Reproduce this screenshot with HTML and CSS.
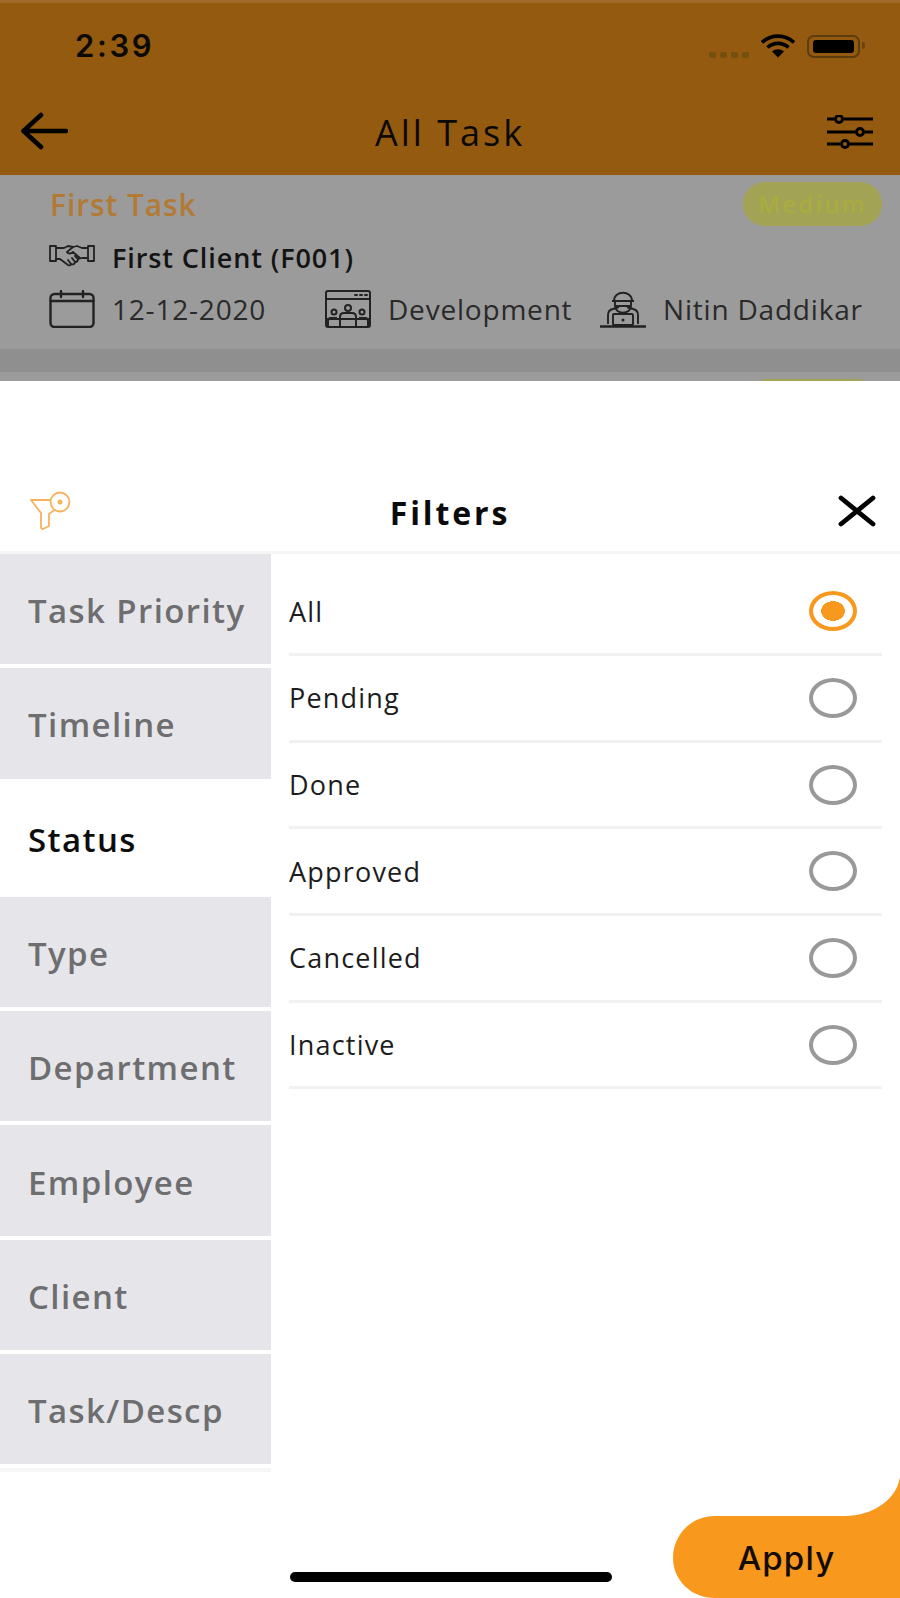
FILE: index.html
```html
<!DOCTYPE html>
<html lang="en">
<head>
<meta charset="utf-8">
<title>All Task</title>
<link rel="stylesheet" href="styles.css">
</head>
<body>
<div class="screen">
  <header class="appbar">
    <div class="status">
      <span class="time">2:39</span>
      <div class="status-icons">
        <span class="dots"><i></i><i></i><i></i><i></i></span>
        <svg class="wifi" viewBox="0 0 36 24"><path d="M2 8.500C11 0 25 0 34 8.500M7.500 13.500C13.500 8 22.500 8 28.500 13.500" fill="none" stroke="#000" stroke-width="3.600"/><path d="M12 17.500C15.500 14.500 20.500 14.500 24 17.500L18 23.500Z" fill="#000"/></svg>
        <span class="battery"><i></i></span>
      </div>
    </div>
    <nav class="nav">
      <svg class="back" viewBox="0 0 48 38"><path d="M21 3 3.500 19 21 35M3.500 19H46" fill="none" stroke="#000" stroke-width="4.600" stroke-linecap="round" stroke-linejoin="round"/></svg>
      <h1 class="nav-title">All Task</h1>
      <svg class="sliders" viewBox="0 0 46 34"><g fill="none" stroke="#000" stroke-width="3"><path d="M0 4h7M17 4h29M0 17h28M38 17h8M0 29h13M23 29h23"/><circle cx="12" cy="4" r="3.500"/><circle cx="33" cy="17" r="3.500"/><circle cx="18" cy="29" r="3.500"/></g></svg>
    </nav>
  </header>

  <section class="list">
    <article class="card">
      <div class="card-top">
        <span class="task-name">First Task</span>
        <span class="badge">Medium</span>
      </div>
      <div class="client">
        <svg class="icon-client" viewBox="0 0 46 24"><g fill="none" stroke="#222" stroke-width="1.800" stroke-linejoin="round" stroke-linecap="round"><path d="M1 3h6v15H1zM39 3h6v15h-6z"/><path d="M7 5h8l4-2 5 1 4-1 5 2h6M7 16h4l8 6c2 1 3 0 3-1 2 1 4 0 4-2 2 0 3-1 3-3l4-1h6"/><path d="M24 4l-6 5c1 2 4 2 6 0l7 6M19 17l3 4M23 15l3 4M26 13l3 3"/></g></svg>
        <span>First Client (F001)</span>
      </div>
      <div class="meta">
        <span class="meta-item">
          <svg class="icon" viewBox="0 0 46 38"><g fill="none" stroke="#222" stroke-width="2.400" stroke-linecap="round"><rect x="1.500" y="4" width="43" height="33" rx="4"/><path d="M1.500 11h43M12 1v6M34 1v6"/></g></svg>
          <span>12-12-2020</span>
        </span>
        <span class="meta-item">
          <svg class="icon" viewBox="0 0 46 38"><g fill="none" stroke="#222" stroke-width="2"><rect x="1" y="1" width="44" height="36" rx="2"/><path d="M1 9h44M1 29h44"/><path d="M30 5h2M35 5h2M40 5h2" stroke-linecap="round"/><circle cx="23" cy="18" r="3"/><circle cx="9" cy="22" r="2.500"/><circle cx="37" cy="22" r="2.500"/><path d="M15 37V27q0-4 4-4h8q4 0 4 4v10M3 37v-6q0-3 3-3h6M43 37v-6q0-3-3-3h-6"/></g></svg>
          <span>Development</span>
        </span>
        <span class="meta-item">
          <svg class="icon" viewBox="0 0 46 38"><g fill="none" stroke="#222" stroke-width="1.900" stroke-linejoin="round"><path d="M14 11C14 0 32 0 32 11M12 11h22"/><path d="M15 11v5c0 9 16 9 16 0v-5M16 16h14"/><path d="M8 34v-9q0-5 5-6l6-2M38 34v-9q0-5-5-6l-6-2"/><rect x="13" y="24" width="20" height="11" rx="1"/><path d="M0 36.500h46" stroke-width="2.500"/></g><circle cx="23" cy="30" r="1.500" fill="#222"/></svg>
          <span>Nitin Daddikar</span>
        </span>
      </div>
    </article>
    <div class="card-gap"></div>
    <div class="card-next"><span class="badge-next"></span></div>
  </section>

  <section class="sheet">
    <div class="sheet-head">
      <svg class="filter-icon" viewBox="0 0 42 40"><g fill="none" stroke="#f7b25f" stroke-width="1.800" stroke-linejoin="round"><path d="M1 9h20c0 3 2 6 6 8l-8 6v12l-6 3c-2 0-2-1-2-2V22Z"/><circle cx="30" cy="11" r="9.500" fill="#fff"/></g><circle cx="30" cy="11" r="2.500" fill="#f7b25f"/></svg>
      <h2 class="sheet-title">Filters</h2>
      <svg class="close" viewBox="0 0 38 32"><path d="M3 3l32 26M35 3 3 29" fill="none" stroke="#000" stroke-width="4.800" stroke-linecap="round"/></svg>
    </div>
    <div class="sheet-body">
      <aside class="tabs">
        <div class="tab">Task Priority</div>
        <div class="tab">Timeline</div>
        <div class="tab tab-active">Status</div>
        <div class="tab">Type</div>
        <div class="tab">Department</div>
        <div class="tab">Employee</div>
        <div class="tab">Client</div>
        <div class="tab">Task/Descp</div>
        <div class="tab-end"></div>
      </aside>
      <div class="options">
        <div class="option"><span>All</span><span class="radio radio-on"></span></div>
        <div class="option"><span>Pending</span><span class="radio"></span></div>
        <div class="option"><span>Done</span><span class="radio"></span></div>
        <div class="option"><span>Approved</span><span class="radio"></span></div>
        <div class="option"><span>Cancelled</span><span class="radio"></span></div>
        <div class="option"><span>Inactive</span><span class="radio"></span></div>
      </div>
    </div>
    <div class="home-bar"></div>
    <button class="apply" type="button">
      <svg class="apply-shape" viewBox="0 0 227 121"><path d="M227 0V121H42C18 121 0 103 0 81 0 58 18 39 42 39H172C200 39 224 22 227 0Z" fill="#f8981d"/></svg>
      <span class="apply-label">Apply</span>
    </button>
  </section>
</div>
</body>
</html>
```

FILE: styles.css
```css
* { box-sizing: border-box; }
html, body { margin: 0; padding: 0; background: #fff; }
body { font-family: "Open Sans", "Liberation Sans", sans-serif; }
h1, h2 { margin: 0; font-weight: inherit; }

.screen {
  position: relative;
  width: 900px;
  height: 1598px;
  display: flex;
  flex-direction: column;
  overflow: hidden;
}

.appbar {
  height: 175px;
  background: #945a10;
  border-top: 3px solid #a06c2a;
  color: #000;
  flex: none;
}
.status {
  height: 91px;
  display: flex;
  align-items: flex-start;
  justify-content: space-between;
  padding: 25px 40px 0 75px;
}
.time {
  font-family: Inter, "Liberation Sans", sans-serif;
  font-size: 31px;
  font-weight: 600;
  line-height: 35px;
  letter-spacing: 2.600px;
  color: #0c0a05;
}
.status-icons {
  display: flex;
  align-items: center;
  gap: 11px;
  padding-top: 6px;
}
.dots { display: flex; gap: 4px; padding-top: 18px; }
.dots i { width: 7px; height: 6px; border-radius: 2px; background: #74500f; }
.wifi { width: 36px; height: 24px; display: block; margin-left: 0; }
.battery {
  position: relative;
  width: 53px;
  height: 23px;
  padding: 3px 4px;
  border: 2px solid #5b3d10;
  border-radius: 7px;
  display: block;
}
.battery::after {
  content: "";
  position: absolute;
  right: -7px;
  top: 5px;
  width: 3px;
  height: 7px;
  border-radius: 0 2px 2px 0;
  background: #6b4510;
}
.battery i { display: block; height: 100%; width: 100%; border-radius: 3px; background: #000; }

.nav {
  height: 81px;
  display: grid;
  grid-template-columns: 1fr auto 1fr;
  align-items: start;
  padding: 18px 27px 0 20px;
}
.back { width: 48px; height: 38px; display: block; }
.nav-title {
  font-size: 36px;
  line-height: 44px;
  letter-spacing: 3px;
  color: #0b0903;
  margin-top: -1px;
  margin-left: 7px;
}
.sliders { width: 46px; height: 34px; display: block; margin-top: 3px; justify-self: end; }

.list {
  height: 206px;
  background: #9b9b9b;
  flex: none;
  overflow: hidden;
}
.card { height: 174px; padding: 7px 18px 0 49px; }
.card-top {
  display: flex;
  justify-content: space-between;
  align-items: center;
  height: 44px;
}
.task-name {
  font-size: 30px;
  font-weight: 600;
  letter-spacing: .9px;
  margin-left: 1px;
  color: #b27a35;
}
.badge {
  width: 139px;
  height: 44px;
  border-radius: 22px;
  background: #a3a355;
  color: #a9ac3e;
  font-size: 24px;
  font-weight: 600;
  letter-spacing: 2.200px;
  text-align: center;
  line-height: 44px;
}
.client {
  display: flex;
  align-items: center;
  gap: 17px;
  margin-top: 13px;
  height: 36px;
  font-size: 27px;
  font-weight: 600;
  letter-spacing: .9px;
  color: #141414;
}
.icon-client { width: 46px; height: 24px; display: block; margin-top: -5px; }
.meta {
  display: grid;
  grid-template-columns: 276px 275px auto;
  align-items: center;
  margin-top: 14px;
  font-size: 28px;
  letter-spacing: .8px;
  line-height: 40px;
  color: #2a2a2a;
}
.meta-item { display: flex; align-items: center; gap: 17px; }
.icon { width: 46px; height: 38px; display: block; flex: none; }
.card-gap { height: 23px; background: #8f8f8f; }
.card-next { height: 9px; display: flex; justify-content: flex-end; padding: 7px 32px 0 0; }
.badge-next { display: block; width: 112px; height: 20px; border-radius: 10px; background: #a3a355; }

.sheet {
  flex: 1;
  background: #fff;
  display: flex;
  flex-direction: column;
  padding-top: 100px;
}
.sheet-head {
  height: 73px;
  border-bottom: 3px solid #f5f5f5;
  display: grid;
  grid-template-columns: 1fr auto 1fr;
  align-items: start;
  padding: 10px 24px 0 30px;
}
.filter-icon { width: 42px; height: 40px; display: block; }
.sheet-title {
  font-size: 32px;
  font-weight: 700;
  letter-spacing: 2.900px;
  line-height: 42px;
  color: #0a0a0a;
  margin-top: 1px;
  margin-right: 6px;
}
.close { width: 38px; height: 32px; display: block; margin-top: 4px; justify-self: end; }

.sheet-body { display: flex; align-items: flex-start; }
.tabs { width: 271px; flex: none; }
.tab {
  height: 110.300px;
  margin-bottom: 4px;
  background: #e6e6ea;
  color: #6e6e70;
  font-size: 33px;
  font-weight: 600;
  letter-spacing: 1.400px;
  padding: 3px 0 0 28px;
  display: flex;
  align-items: center;
}
.tab-active { background: #fff; color: #0d0d0d; }
.tab-end { height: 4px; background: #f6f6f7; }

.options { flex: 1; padding: 15px 18px 0 18px; }
.option {
  height: 86.700px;
  border-bottom: 3px solid #f1f1f1;
  display: flex;
  align-items: center;
  justify-content: space-between;
  font-size: 27px;
  letter-spacing: 1.200px;
  color: #1d1d1d;
  padding: 0 25px 0 0;
}
.option:first-child { height: 87px; }
.radio {
  width: 48px;
  height: 40px;
  border: 4px solid #999;
  border-radius: 50%;
  display: block;
}
.radio-on {
  border-color: #f8981d;
  background: radial-gradient(ellipse 12px 10px at center, #f8981d 97%, transparent 100%);
}

.home-bar {
  position: absolute;
  left: 290px;
  top: 1572px;
  width: 322px;
  height: 10px;
  border-radius: 5px;
  background: #000;
}
.apply {
  position: absolute;
  right: 0;
  bottom: 0;
  width: 227px;
  height: 121px;
  padding: 39px 0 0;
  border: 0;
  background: none;
  font-family: Inter, "Liberation Sans", sans-serif;
}
.apply-shape { position: absolute; inset: 0; width: 100%; height: 100%; display: block; }
.apply-label {
  position: relative;
  display: block;
  font-size: 33px;
  font-weight: 500;
  letter-spacing: 1.200px;
  line-height: 84px;
  color: #120c02;
}
```
